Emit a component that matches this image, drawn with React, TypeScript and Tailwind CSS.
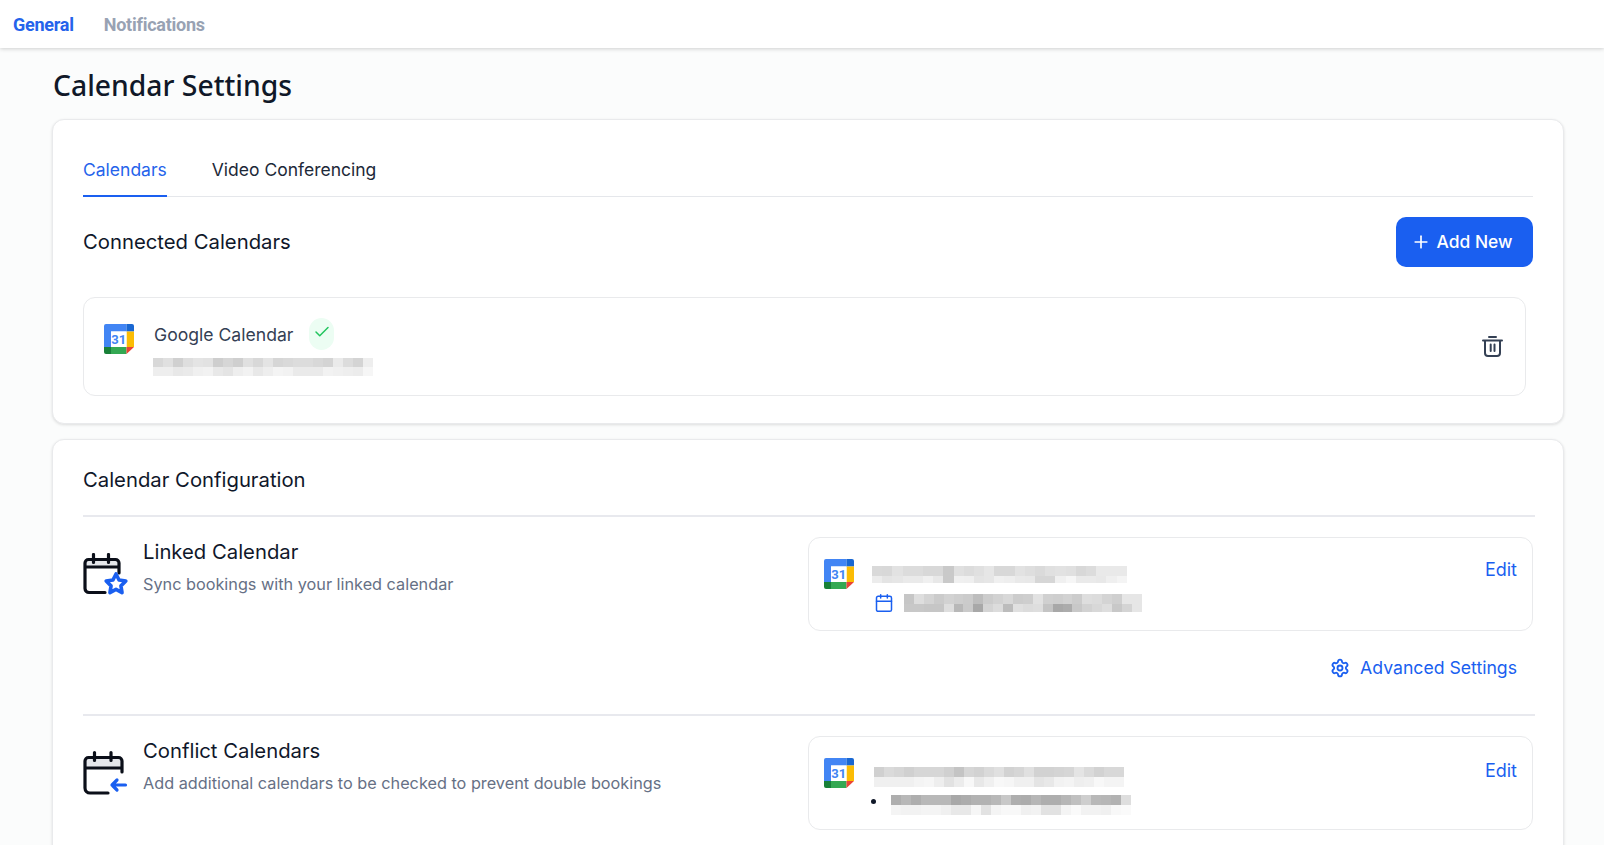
import { Calendar, Check, Plus, Settings } from 'lucide-react';

function GoogleCalendarIcon() {
    return (
        <svg width="30" height="30" viewBox="0 0 30 30" className="shrink-0 block">
            <path d="M2 0h20.5v7.5H7V23H0V2a2 2 0 0 1 2-2z" fill="#4285F4" />
            <path d="M22.5 0H28a2 2 0 0 1 2 2v5.5h-7.5z" fill="#1967D2" />
            <rect x="22.5" y="7.5" width="7.5" height="15.5" fill="#FBBC04" />
            <rect x="7" y="23" width="15.5" height="7" fill="#34A853" />
            <path d="M0 23h7v7H2a2 2 0 0 1-2-2z" fill="#188038" />
            <path d="M22.5 23H30l-7.5 7z" fill="#EA4335" />
            <rect x="7" y="7.5" width="15.5" height="15.5" fill="#fff" />
            <text x="14.8" y="20" textAnchor="middle" fontSize="13" fontWeight="700" fill="#4285F4" fontFamily="Roboto, sans-serif">31</text>
        </svg>
    );
}

function TrashIcon() {
    return (
        <svg width="24" height="24" viewBox="0 0 24 24" fill="none" stroke="#344054" strokeWidth="2" strokeLinecap="round" strokeLinejoin="round" className="shrink-0">
            <path d="M8 2h7" />
            <path d="M2 5.5h19" />
            <path d="M4 6v12a3 3 0 0 0 3 3h9a3 3 0 0 0 3-3V6" />
            <path d="M9.7 9.5v6.5M13.5 9.5v6.5" />
        </svg>
    );
}

function CalendarStarIcon() {
    return (
        <svg width="46" height="46" viewBox="0 0 46 46" fill="none" className="shrink-0">
            <path d="M2 13V10a4 4 0 0 1 4-4h26a4 4 0 0 1 4 4v3z" fill="#E5E7EB" />
            <path d="M22 39.5H6a4 4 0 0 1-4-4V10a3.5 3.5 0 0 1 3.5-3.5h27A3.5 3.5 0 0 1 36 10v10" stroke="#0b0f19" strokeWidth="3.2" strokeLinecap="round" />
            <path d="M2 14h34" stroke="#0b0f19" strokeWidth="3.2" />
            <path d="M10.5 1.5v8M25.5 1.5v8" stroke="#0b0f19" strokeWidth="3.2" strokeLinecap="round" />
            <path d="M33 22l2.7 5.5 6.1.9-4.4 4.3 1 6-5.4-2.9-5.4 2.9 1-6-4.4-4.3 6.1-.9z" transform="translate(33 31) scale(1.12) translate(-33 -31)" fill="#fff" stroke="#1a5ff0" strokeWidth="3.2" strokeLinejoin="round" />
        </svg>
    );
}

function CalendarArrowIcon() {
    return (
        <svg width="46" height="46" viewBox="0 0 46 46" fill="none" className="shrink-0 overflow-visible">
            <path d="M2 16V9a3.5 3.5 0 0 1 3.5-3.5h30A3.5 3.5 0 0 1 39 9v7z" fill="#E5E7EB" />
            <path d="M25 41H7a5 5 0 0 1-5-5V9a3.5 3.5 0 0 1 3.5-3.5h30A3.5 3.5 0 0 1 39 9v11" stroke="#0b0f19" strokeWidth="3.2" strokeLinecap="round" />
            <path d="M2 16h37" stroke="#0b0f19" strokeWidth="3.2" />
            <path d="M11.5 0.5v8M28 0.5v8" stroke="#0b0f19" strokeWidth="3.2" strokeLinecap="round" />
            <path d="M42.5 33H29M34 28l-5 5 5 5" stroke="#1a5ff0" strokeWidth="3.2" strokeLinecap="round" strokeLinejoin="round" />
        </svg>
    );
}

// blurred account names, one hex grey per mosaic cell
function Mosaic({ rows, cell, heights, className }: { rows: string[]; cell: number; heights: number[]; className?: string }) {
    return (
        <div className={className}>
            {rows.map((row, i) => (
                <div key={i} className="flex">
                    {row.split(' ').map((g, j) => (
                        <div key={j} style={{ width: cell, height: heights[i], backgroundColor: `#${g}${g}${g}` }} />
                    ))}
                </div>
            ))}
        </div>
    );
}

function ConfigRow({ icon, title, description, children }: { icon: React.ReactNode; title: string; description: string; children: React.ReactNode }) {
    return (
        <div className="flex">
            <div className="w-[725px] flex items-start">
                <div className="mt-[16px] mr-[14px]">{icon}</div>
                <div>
                    <h3 className="text-[20.3px] leading-[30px] font-normal text-[#0f172a] whitespace-nowrap">{title}</h3>
                    <p className="mt-[2px] text-[16.25px] leading-[30px] text-[#667085] whitespace-nowrap">{description}</p>
                </div>
            </div>
            <div className="w-[725px] h-[94px] border border-[#e9eaec] rounded-[12px] bg-white flex justify-between relative">
                {children}
            </div>
        </div>
    );
}

export default function App() {
    return (
        <div className="h-[845px] overflow-hidden bg-[#fbfcfc] font-['Inter',sans-serif]">
            <div className="h-12 bg-white shadow-[0_1px_4px_rgba(0,0,0,0.18)] flex items-center pl-[13px] gap-[30px] font-['Roboto',sans-serif] text-[18px] font-bold tracking-[-0.25px]">
                <span className="text-[#2563eb]">General</span>
                <span className="text-[#98a2b3]">Notifications</span>
            </div>

            <main className="pl-[52px] pr-[40px]">
                <h1 className="pl-px pt-[18px] h-[71px] text-[28.3px] leading-[38px] font-medium text-[#101828] font-['Noto_Sans',sans-serif]">Calendar Settings</h1>

                <section className="h-[305px] bg-white border border-[#e9eaec] rounded-[12px] shadow-[0_1px_3px_rgba(0,0,0,0.12)] pl-[30px] pr-[30px]">
                    <div className="flex h-[77px] border-b border-[#e5e7eb] items-end gap-[45px] text-[17.5px]">
                        <div className="pb-[12px] border-b-2 border-[#1a5ff0] -mb-px text-[#2563eb] leading-[26px]">Calendars</div>
                        <div className="pb-[14px] -mb-px text-[#1d2939] leading-[26px]">Video Conferencing</div>
                    </div>
                    <div className="flex items-center justify-between mt-5">
                        <h2 className="text-[20.3px] font-normal text-[#0f172a]">Connected Calendars</h2>
                        <button className="w-[137px] h-[50px] pr-[6px] bg-[#1a5ff0] rounded-[10px] text-white text-[17.4px] font-medium flex items-center justify-center gap-[6px]">
                            <Plus size={20} strokeWidth={2} />
                            Add New
                        </button>
                    </div>
                    <div className="mt-[30px] mr-[7px] h-[99px] border border-[#e9eaec] rounded-[12px] flex items-center justify-between pl-[20px] pr-[20px]">
                        <div className="flex items-start self-start mt-[20px]">
                            <div className="mt-[6px]">
                                <GoogleCalendarIcon />
                            </div>
                            <div className="ml-[19px]">
                                <div className="flex items-center gap-[16px] h-[32px]">
                                    <span className="ml-px pt-[2px] text-[17.6px] text-[#344054]">Google Calendar</span>
                                    <span className="w-[25px] h-[32px] rounded-full bg-[#ecfdf3] flex items-start justify-center pt-[5px]">
                                        <Check size={18} strokeWidth={2} className="text-[#22c55e]" />
                                    </span>
                                </div>
                                <Mosaic
                                    className="mt-[8px]"
                                    cell={10}
                                    heights={[9, 9]}
                                    rows={[
                                        'd8 e0 d0 de e4 e2 ce d6 cf e0 d8 e4 d6 d9 dc dc d8 d4 ea dc d4 ee',
                                        'ee ee e8 ea f0 f2 e8 e4 ee f2 e8 ee f4 f2 ea ea ea f2 f0 ee ec f6',
                                    ]}
                                />
                            </div>
                        </div>
                        <TrashIcon />
                    </div>
                </section>

                <section className="mt-[15px] h-[500px] bg-white border border-[#e9eaec] rounded-[12px] shadow-[0_1px_3px_rgba(0,0,0,0.12)] pl-[30px] pr-[28px]">
                    <h2 className="h-[77px] pt-[6px] border-b-2 border-[#e8e9ee] flex items-center text-[20.3px] font-normal text-[#0f172a]">Calendar Configuration</h2>

                    <div className="pt-[20px] h-[199px] border-b-2 border-[#e8e9ee]">
                        <ConfigRow icon={<CalendarStarIcon />} title="Linked Calendar" description="Sync bookings with your linked calendar">
                            <div className="flex pl-[15px] pt-[21px]">
                                <GoogleCalendarIcon />
                                <div className="ml-[18px] mt-[7px]">
                                    <Mosaic
                                        cell={10.2}
                                        heights={[10, 7]}
                                        rows={[
                                            'd9 d8 e2 dc dc d8 d8 c9 e0 dc e0 e6 d8 d8 e2 de da e0 e2 e0 d8 dc e9 e9 e9',
                                            'ec e4 e6 ea ea f0 e8 c9 f0 ef e4 e6 f0 ee e9 e8 d6 d6 f0 f6 ea ea e8 ef f4',
                                        ]}
                                    />
                                    <div className="flex items-center mt-[10px]">
                                        <Calendar size={20} strokeWidth={1.8} className="text-[#1a5ff0] ml-[2px] mr-[10px]" />
                                        <Mosaic
                                            cell={9.92}
                                            heights={[10, 8]}
                                            rows={[
                                                'c6 de d4 cb d2 ce cb bd cc d2 d8 cc ce e2 d0 ce d2 cc de dc d4 cf e6 e6',
                                                'c8 c8 c6 c6 de b8 ca a8 d4 dc bc e0 dc de c4 a8 ac c8 d2 d8 de c8 d4 e6',
                                            ]}
                                        />
                                    </div>
                                </div>
                            </div>
                            <span className="absolute right-[15px] top-[20px] text-[18px] leading-[24px] text-[#1a5ff0]">Edit</span>
                        </ConfigRow>
                        <div className="flex justify-end items-center gap-[10px] mt-[23px] pr-[18px] text-[17.65px] leading-[28px] text-[#1a5ff0]">
                            <Settings size={20} strokeWidth={2.2} />
                            Advanced Settings
                        </div>
                    </div>

                    <div className="pt-[20px]">
                        <ConfigRow icon={<CalendarArrowIcon />} title="Conflict Calendars" description="Add additional calendars to be checked to prevent double bookings">
                            <div className="flex pl-[15px] pt-[21px]">
                                <GoogleCalendarIcon />
                                <div className="ml-[20px] mt-[9px]">
                                    <Mosaic
                                        cell={10}
                                        heights={[10, 10]}
                                        rows={[
                                            'd0 da d6 d0 d6 d6 d6 d0 c4 d6 d2 da e0 d2 d6 e0 d2 d2 d4 d6 e4 da d2 d8 d8',
                                            'f0 f0 f0 f0 f4 f6 ee e2 ec f8 e8 f0 f8 f6 f0 f0 e4 e8 f2 f4 ee f0 f8 f4 f4',
                                        ]}
                                    />
                                    <div className="flex items-start mt-[8px]">
                                        <span className="w-[5px] h-[5px] mt-[4px] rounded-full bg-[#101828] -ml-[3px] mr-[15px]" />
                                        <Mosaic
                                            cell={10}
                                            heights={[10, 10]}
                                            rows={[
                                                'ae b8 ae b8 b8 b8 a8 ac b2 b2 b8 c8 ae ac b6 ae ae b6 c0 ce b8 b6 b2 de',
                                                'f4 f2 f2 f4 f4 f0 e8 e8 f6 e2 f4 f8 f8 f0 f2 e2 e2 f4 fa f2 f2 f0 f8 fa',
                                            ]}
                                        />
                                    </div>
                                </div>
                            </div>
                            <span className="absolute right-[15px] top-[22px] text-[18px] leading-[24px] text-[#1a5ff0]">Edit</span>
                        </ConfigRow>
                    </div>
                </section>
            </main>
        </div>
    );
}
